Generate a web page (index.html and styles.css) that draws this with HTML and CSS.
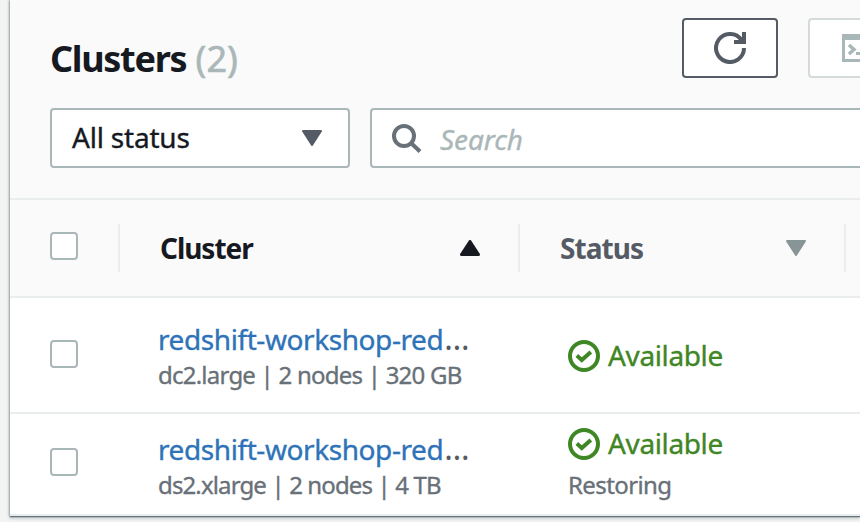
FILE: index.html
```html
<!DOCTYPE html>
<html lang="en">
<head>
<meta charset="utf-8">
<title>Clusters</title>
<link rel="stylesheet" href="styles.css">
</head>
<body>
<main class="panel">
  <header class="panel-header">
    <div class="title-row">
      <h1 class="title"><span class="title-name">Clusters</span> <span class="count">(2)</span></h1>
      <div class="actions">
        <button class="button" aria-label="Refresh">
          <svg width="32" height="32" viewBox="0 0 32 32"><path d="M30 16A14 14 0 1 1 27.500 8" fill="none" stroke="#545b64" stroke-width="4"/><path d="M28 0h4v12H20V8h5l3-3z" fill="#545b64"/></svg>
        </button>
        <button class="button button-disabled" aria-label="Query cluster">
          <svg width="18" height="28" viewBox="0 0 18 28" fill="none" stroke="#aab7b8"><path d="M1.500 1.500h29v25h-29z" stroke-width="3"/><path d="M0 3h32" stroke-width="6"/><path d="M7 11l5 4.500-5 4.500" stroke-width="3.500"/><path d="M14 19.500h6" stroke-width="3"/></svg>
        </button>
      </div>
    </div>
    <div class="filters">
      <div class="select"><span class="select-label">All status</span>
        <svg width="20" height="16" viewBox="0 0 20 16"><path d="M1 1h18L10 15z" fill="#545b64" stroke="#545b64" stroke-width="2" stroke-linejoin="round"/></svg>
      </div>
      <div class="search">
        <svg width="32" height="32" viewBox="0 0 32 32" fill="none" stroke="#687078" stroke-width="4"><circle cx="14" cy="14" r="10"/><path d="M21 21l9 8.500"/></svg>
        <span class="placeholder">Search</span>
      </div>
    </div>
  </header>
  <section class="table">
    <div class="row head">
      <div class="cell check"><span class="checkbox"></span></div>
      <div class="cell sort"><span class="head-cluster">Cluster</span>
        <svg width="20" height="16" viewBox="0 0 20 16"><path d="M1.500 14.500h17L10 1.500z" fill="#16191f" stroke="#16191f" stroke-width="3" stroke-linejoin="round"/></svg>
      </div>
      <div class="cell sort"><span class="head-status">Status</span>
        <svg width="20" height="16" viewBox="0 0 20 16"><path d="M1 1h18L10 15z" fill="#879596" stroke="#879596" stroke-width="2" stroke-linejoin="round"/></svg>
      </div>
    </div>
    <div class="row first">
      <div class="cell check"><span class="checkbox"></span></div>
      <div class="cell cluster">
        <div class="name"><a class="link">redshift-workshop-red</a><span class="dots">…</span></div>
        <div class="meta meta-dc">dc2.large | 2 nodes | 320 GB</div>
      </div>
      <div class="cell status">
        <div class="available"><svg width="32" height="32" viewBox="0 0 32 32" fill="none" stroke="#3f8624" stroke-width="4"><circle cx="16" cy="16" r="14"/><path d="M8.800 15.500l5 4.500 9-8"/></svg><span>Available</span></div>
      </div>
    </div>
    <div class="row second">
      <div class="cell check"><span class="checkbox"></span></div>
      <div class="cell cluster">
        <div class="name"><a class="link">redshift-workshop-red</a><span class="dots">…</span></div>
        <div class="meta meta-ds">ds2.xlarge | 2 nodes | 4 TB</div>
      </div>
      <div class="cell status">
        <div class="available"><svg width="32" height="32" viewBox="0 0 32 32" fill="none" stroke="#3f8624" stroke-width="4"><circle cx="16" cy="16" r="14"/><path d="M8.800 15.500l5 4.500 9-8"/></svg><span>Available</span></div>
        <div class="meta restoring">Restoring</div>
      </div>
    </div>
  </section>
</main>
</body>
</html>
```
FILE: styles.css
```css
* { box-sizing: border-box; }
body {
  margin: 0;
  height: 522px;
  overflow: hidden;
  background: #f2f3f3;
  font-family: "Noto Sans", sans-serif;
  font-size: 28px;
  line-height: 36px;
  color: #16191f;
  -webkit-text-stroke: .35px;
}
svg { display: block; flex: none; }
.panel {
  height: 516px;
  margin-left: 10px;
  background: #fff;
  box-shadow: 0 1px 1px #687078, 0 2px 3px #aab7b8, -1px 0 2px #aab0b3;
}
.panel-header {
  height: 200px;
  padding: 18px 0 0 40px;
  background: #fafafa;
  border-bottom: 2px solid #eaeded;
}
.title-row { display: flex; justify-content: space-between; height: 60px; }
.title {
  margin: 0;
  padding-top: 17px;
  font-size: 36px;
  line-height: 48px;
  font-weight: 700;
  white-space: nowrap;
}
.title-name { letter-spacing: -1.3px; -webkit-text-stroke: 0; }
.count { font-weight: 400; color: #aab7b8; -webkit-text-stroke: .6px; }
.actions { display: flex; gap: 30px; }
.button {
  display: flex;
  align-items: center;
  width: 96px;
  height: 60px;
  padding: 0 0 0 30px;
  background: #fff;
  border: 2px solid #545b64;
  border-radius: 4px;
}
.button-disabled {
  width: 52px;
  padding-left: 32px;
  border-color: #d5dbdb;
  border-right: 0;
  border-radius: 4px 0 0 4px;
}
.filters { display: flex; gap: 20px; margin-top: 30px; }
.select, .search {
  display: flex;
  align-items: center;
  height: 60px;
  border: 2px solid #aab7b8;
  border-radius: 4px;
  background: #fff;
}
.select { width: 300px; justify-content: space-between; padding: 0 26px 0 20px; }
.select-label { letter-spacing: -.2px; padding-bottom: 2px; }
.search {
  flex: 1;
  padding-left: 18px;
  gap: 18px;
  border-right: 0;
  border-radius: 4px 0 0 4px;
}
.placeholder { font-style: italic; color: #aab7b8; letter-spacing: -.1px; padding-top: 2px; }
.row { display: grid; grid-template-columns: 110px 400px 326px; border-bottom: 2px solid #eaeded; }
.head {
  height: 98px;
  align-items: center;
  background: #fafafa;
  font-weight: 700;
  -webkit-text-stroke: 0;
}
.head .cell { display: flex; align-items: center; height: 48px; border-right: 2px solid #eaeded; }
.sort { justify-content: space-between; padding: 0 38px 0 40px; }
.head-cluster { letter-spacing: -1.05px; }
.head-status { color: #545b64; letter-spacing: -.95px; }
.check { padding-left: 40px; }
.checkbox {
  display: block;
  width: 28px;
  height: 28px;
  border: 2px solid #aab7b8;
  border-radius: 4px;
  background: #fff;
}
.head .checkbox { margin-bottom: 4px; }
.first { height: 116px; }
.second { height: 102px; }
.first .check { padding-top: 42px; }
.second .check { padding-top: 34px; }
.cluster { padding-left: 38px; white-space: nowrap; }
.first .cluster { padding-top: 23px; }
.second .cluster { padding-top: 17px; }
.link { color: #2e73b8; letter-spacing: -.42px; }
.dots { color: #545b64; font-size: 32px; line-height: 20px; margin-left: 1px; -webkit-text-stroke: 0; }
.meta { font-size: 24px; line-height: 34px; color: #687078; padding-top: 1px; }
.meta-dc { letter-spacing: -.77px; }
.meta-ds { letter-spacing: -.87px; }
.restoring { letter-spacing: -.6px; }
.status { padding-left: 48px; }
.first .status { padding-top: 40px; }
.second .status { padding-top: 12px; }
.available { display: flex; align-items: center; gap: 8px; color: #3f8624; letter-spacing: -.37px; }
.available span { padding-bottom: 2px; margin-top: -1px; margin-bottom: -1px; }
.restoring { margin-top: 5px; }
```
